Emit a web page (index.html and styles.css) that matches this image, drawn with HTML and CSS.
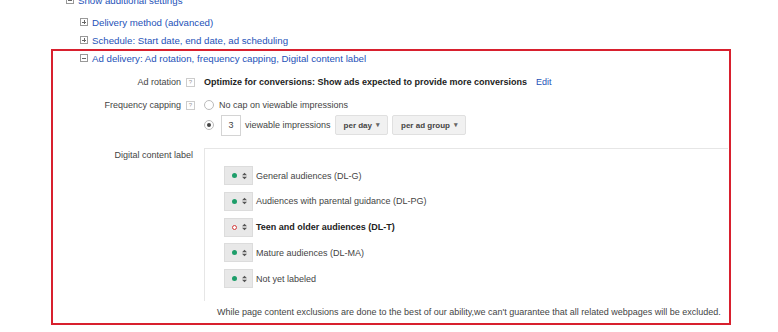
FILE: index.html
```html
<!doctype html>
<html>
    <head>
        <meta charset="utf-8">
        <title>Ad delivery settings</title>
        <link rel="stylesheet" href="styles.css">
    </head>
    <body>
        <div class="settings">
            <div class="toggle top"><span class="box minus"></span><a>Show additional settings</a></div>
            <div class="toggle"><span class="box plus"></span><a>Delivery method (advanced)</a></div>
            <div class="toggle"><span class="box plus"></span><a>Schedule: Start date, end date, ad scheduling</a></div>

            <section class="panel">
                <div class="toggle head"><span class="box minus"></span><a>Ad delivery: Ad rotation, frequency capping, Digital content label</a></div>

                <div class="form">
                    <div class="label rot">Ad rotation <span class="help">?</span></div>
                    <div class="value rot">
                        <b>Optimize for conversions: Show ads expected to provide more conversions</b>
                        <a class="edit">Edit</a>
                    </div>

                    <div class="label freq">Frequency capping <span class="help">?</span></div>
                    <div class="value freq">
                        <div class="opt"><span class="radio"></span>No cap on viewable impressions</div>
                        <div class="opt"><span class="radio on"></span><span class="num">3</span>viewable impressions
                            <span class="drop">per day <i>&#9662;</i></span>
                            <span class="drop">per ad group <i>&#9662;</i></span>
                        </div>
                    </div>

                    <div class="label dcl">Digital content label</div>
                    <div class="value">
                        <div class="labels">
                            <div class="item"><span class="pick"><span class="dot"></span><svg class="arrows" viewBox="0 0 6 9"><path d="M0 3.5 3 0.5 6 3.5Z M0 5.5 3 8.5 6 5.5Z"/></svg></span>General audiences (DL-G)</div>
                            <div class="item"><span class="pick"><span class="dot"></span><svg class="arrows" viewBox="0 0 6 9"><path d="M0 3.5 3 0.5 6 3.5Z M0 5.5 3 8.5 6 5.5Z"/></svg></span>Audiences with parental guidance (DL-PG)</div>
                            <div class="item excluded"><span class="pick"><span class="dot"></span><svg class="arrows" viewBox="0 0 6 9"><path d="M0 3.5 3 0.5 6 3.5Z M0 5.5 3 8.5 6 5.5Z"/></svg></span>Teen and older audiences (DL-T)</div>
                            <div class="item"><span class="pick"><span class="dot"></span><svg class="arrows" viewBox="0 0 6 9"><path d="M0 3.5 3 0.5 6 3.5Z M0 5.5 3 8.5 6 5.5Z"/></svg></span>Mature audiences (DL-MA)</div>
                            <div class="item"><span class="pick"><span class="dot"></span><svg class="arrows" viewBox="0 0 6 9"><path d="M0 3.5 3 0.5 6 3.5Z M0 5.5 3 8.5 6 5.5Z"/></svg></span>Not yet labeled</div>
                        </div>
                    </div>
                </div>

                <p class="note">While page content exclusions are done to the best of our ability,we can't guarantee that all related webpages will be excluded.</p>
            </section>
        </div>
    </body>
</html>
```

FILE: styles.css
```css
html,
body {
    margin: 0;
    background-color: #fff;
}

* {
    font-family: "Liberation Sans", Arial, sans-serif;
    box-sizing: border-box;
}

.settings {
    overflow: hidden;
    height: 332px;
    color: #444;
}

a {
    color: #2552b8;
    cursor: pointer;
}

.toggle {
    display: flex;
    align-items: center;
    height: 18px;
    padding-left: 80px;
    font-size: 9.7px;
}

.toggle.top {
    margin-top: -9px;
    padding-left: 66px;
    margin-bottom: 4px;
}

.box {
    position: relative;
    width: 8px;
    height: 8px;
    border: 1px solid #999;
    margin-right: 4px;
    flex: none;
}

.box::before,
.box.plus::after {
    content: "";
    position: absolute;
    background: #666;
}

.box::before {
    left: 1px;
    right: 1px;
    top: 2.5px;
    height: 1px;
}

.box.plus::after {
    top: 1px;
    bottom: 1px;
    left: 2.5px;
    width: 1px;
}

.panel {
    margin: 0 0 0 51px;
    width: 680px;
    height: 276px;
    border: 2px solid #d8202e;
}

.toggle.head {
    padding-left: 27px;
    height: 14px;
    margin-top: 0;
}

.form {
    display: grid;
    grid-template-columns: 142px 1fr;
    column-gap: 9px;
    font-size: 9px;
    margin-top: 9px;
}

.label {
    display: flex;
    justify-content: flex-end;
    align-items: center;
    color: #444;
    height: 16px;
}

.help {
    display: inline-block;
    width: 9px;
    height: 9px;
    border: 1px solid #ccc;
    font-size: 6px;
    line-height: 7px;
    text-align: center;
    color: #999;
    margin-left: 5px;
}

.value.rot {
    display: flex;
    align-items: center;
    height: 16px;
    color: #222;
}

.edit {
    margin-left: 9px;
}

.label.freq {
    margin-top: 7px;
}

.value.freq {
    margin-top: 7px;
}

.opt {
    display: flex;
    align-items: center;
    height: 16px;
}

.opt + .opt {
    height: 22px;
    margin-top: 1px;
}

.radio {
    width: 10px;
    height: 10px;
    border: 1px solid #bbb;
    border-radius: 50%;
    margin-right: 5px;
    position: relative;
}

.radio.on {
    margin-right: 7px;
}

.radio.on::after {
    content: "";
    position: absolute;
    left: 2px;
    top: 2px;
    width: 4px;
    height: 4px;
    border-radius: 50%;
    background: #444;
}

.num {
    width: 20px;
    height: 21px;
    border: 1px solid #d4d4d4;
    display: flex;
    align-items: center;
    justify-content: center;
    margin-right: 4px;
}

.drop {
    display: inline-flex;
    align-items: center;
    height: 20px;
    padding: 0 7px 0 8px;
    margin-left: 4px;
    background: #f1f1f1;
    border: 1px solid #e0e0e0;
    border-radius: 2px;
    font-size: 8px;
    font-weight: bold;
    color: #444;
}

.drop:first-of-type {
    margin-left: 5px;
}

.drop i {
    font-style: normal;
    font-size: 7px;
    margin-left: 4px;
    color: #666;
}

.label.dcl {
    margin-top: 13px;
    padding-right: 2px;
    height: 12px;
}

.labels {
    margin-top: 12px;
    margin-right: 1px;
    border-top: 1px solid #e6e6e6;
    border-left: 1px solid #e6e6e6;
    padding: 17px 0 13px 19px;
    display: flex;
    flex-direction: column;
    gap: 6.75px;
}

.item {
    display: flex;
    align-items: center;
    height: 19px;
    color: #444;
}

.pick {
    display: flex;
    align-items: center;
    width: 29px;
    height: 19px;
    background: #e8e8e8;
    border: 1px solid #dcdcdc;
    margin-right: 3px;
    padding-left: 7px;
}

.dot {
    width: 5px;
    height: 5px;
    border-radius: 50%;
    background: #1e9e6a;
}

.arrows {
    width: 5px;
    height: 8px;
    margin-left: 5px;
    fill: #555;
}

.item.excluded {
    font-weight: bold;
    color: #222;
}

.item.excluded .dot {
    background: #fff;
    border: 1.5px solid #d23a3a;
}

.note {
    margin: 6px 0 0 164px;
    font-size: 9px;
    color: #444;
}
```
